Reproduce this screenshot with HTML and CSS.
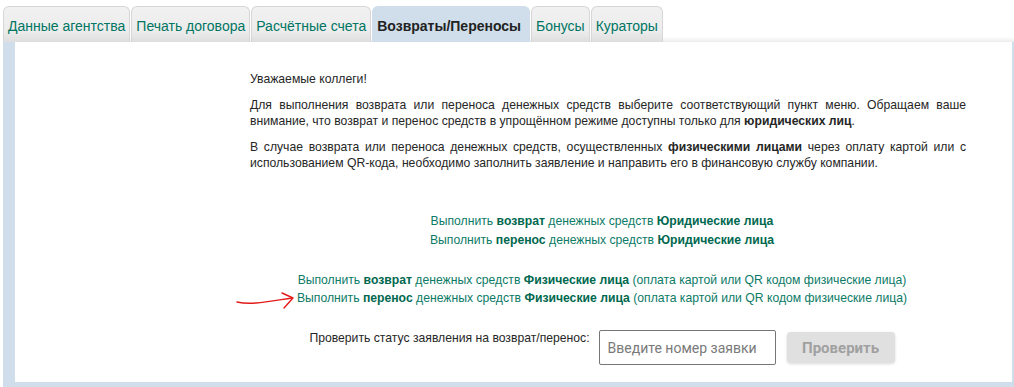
FILE: index.html
```html
<!DOCTYPE html>
<html lang="ru">

<head>
    <meta charset="UTF-8">
    <meta name="viewport" content="width=device-width, initial-scale=1.0">
    <title>Возвраты/Переносы</title>
    <link rel="stylesheet" href="styles.css">
</head>

<body>
    <div class="page">
        <!-- Вкладки -->
        <ul class="tabs">
            <li class="tab"><a href="#">Данные агентства</a></li>
            <li class="tab"><a href="#">Печать договора</a></li>
            <li class="tab"><a href="#">Расчётные счета</a></li>
            <li class="tab active"><a href="#">Возвраты/Переносы</a></li>
            <li class="tab"><a href="#">Бонусы</a></li>
            <li class="tab"><a href="#">Кураторы</a></li>
        </ul>

        <div class="panel">
            <div class="panel-inner">
                <div class="content">
                    <p>Уважаемые коллеги!</p>
                    <p>Для выполнения возврата или переноса денежных средств выберите соответствующий пункт меню. Обращаем ваше внимание, что возврат и перенос средств в упрощённом режиме доступны только для <b>юридических лиц</b>.</p>
                    <p>В случае возврата или переноса денежных средств, осуществленных <b>физическими лицами</b> через оплату картой или с использованием QR-кода, необходимо заполнить заявление и направить его в финансовую службу компании.</p>

                    <div class="links links-legal">
                        <a href="#">Выполнить <b>возврат</b> денежных средств <b>Юридические лица</b></a>
                        <a href="#">Выполнить <b>перенос</b> денежных средств <b>Юридические лица</b></a>
                    </div>

                    <div class="links links-private">
                        <a href="#">Выполнить <b>возврат</b> денежных средств <b>Физические лица</b> (оплата картой или QR кодом физические лица)</a>
                        <a href="#" class="marked">Выполнить <b>перенос</b> денежных средств <b>Физические лица</b> (оплата картой или QR кодом физические лица)
                            <!-- пометка от руки -->
                            <svg class="arrow" width="64" height="20" viewBox="0 0 64 20">
                                <path d="M2,13 C16,16 30,13 57,9" fill="none" stroke="#e31b1b" stroke-width="1.4" stroke-linecap="round" />
                                <path d="M47,4 L58,9 L49,19" fill="none" stroke="#e31b1b" stroke-width="1.4" stroke-linecap="round" stroke-linejoin="round" />
                            </svg>
                        </a>
                    </div>

                    <!-- Проверка статуса -->
                    <form class="status-form" onsubmit="return false;">
                        <label for="claimNumber">Проверить статус заявления на возврат/перенос:</label>
                        <input type="text" id="claimNumber" class="status-input" placeholder="Введите номер заявки">
                        <button type="submit" class="status-btn" disabled>Проверить</button>
                    </form>
                </div>
            </div>
        </div>
    </div>
</body>

</html>
```

FILE: styles.css
```css
/* Общие стили */
body {
    margin: 0;
    padding: 0;
    background-color: #f4f4f4;
    font-family: Tahoma, "Liberation Sans", Arial, sans-serif;
    color: #262626;
}

.page {
    padding: 6px 0 0 3px;
    background-color: #ffffff;
    overflow: hidden;
}

/* Вкладки */
.tabs {
    list-style: none;
    margin: 0;
    padding: 0;
    display: flex;
    gap: 1px;
    height: 36px;
    background: linear-gradient(#ffffff 85%, #ececec);
}

.tab {
    display: flex;
    border: 1px solid #d6d6d6;
    border-bottom: none;
    border-radius: 6px 6px 0 0;
    background: linear-gradient(#f1f1f1, #ececec 70%, #dedede);
}

.tab a {
    display: flex;
    align-items: center;
    padding: 2px 4px 0 4px;
    font-size: 14px;
    color: #007563;
    text-decoration: none;
}

.tab.active {
    background: #cfdeea;
    border-color: #cfdeea;
}

.tab.active a {
    color: #222;
    font-weight: bold;
    padding: 2px 8px 0 4px;
}

/* Панель */
.panel {
    background-color: #cfdeea;
    padding: 0 2px 5px 12px;
}

.panel-inner {
    background-color: #ffffff;
    height: 340px;
    padding-top: 29px;
    box-sizing: border-box;
}

.content {
    margin-left: 235px;
    width: 716px;
    font-size: 12.2px;
    line-height: 16px;
}

.content p {
    margin: 0 0 10px;
    text-align: justify;
}

/* Ссылки */
.links {
    display: flex;
    flex-direction: column;
    align-items: center;
    padding-right: 12px;
    line-height: 19px;
}

.links a {
    color: #0b7a66;
    text-decoration: none;
}

.links a b {
    color: #00684f;
}

.links-legal {
    margin-top: 41px;
}

.links-private {
    margin-top: 21px;
    line-height: 18px;
}

.marked {
    position: relative;
}

.arrow {
    position: absolute;
    left: -62px;
    top: 0;
}

/* Форма проверки статуса */
.status-form {
    display: flex;
    align-items: flex-start;
    justify-content: center;
    padding-right: 12px;
    margin-top: 23px;
}

.status-form label {
    margin-right: 9px;
}

.status-input {
    width: 177px;
    height: 35px;
    box-sizing: border-box;
    border: 1px solid #767676;
    border-radius: 2px;
    padding: 0 8px;
    font-family: Roboto, "Liberation Sans", sans-serif;
    font-size: 14px;
    margin-right: 11px;
}

.status-input::placeholder {
    color: #7a7a7a;
}

.status-btn {
    width: 108px;
    height: 31px;
    margin-top: 2px;
    border: none;
    border-radius: 4px;
    background-color: #e0e0e0;
    color: #a0a0a0;
    font-family: Roboto, "Liberation Sans", sans-serif;
    font-size: 15px;
    font-weight: bold;
    box-shadow: 0 1px 3px rgba(0, 0, 0, 0.15);
}
```
